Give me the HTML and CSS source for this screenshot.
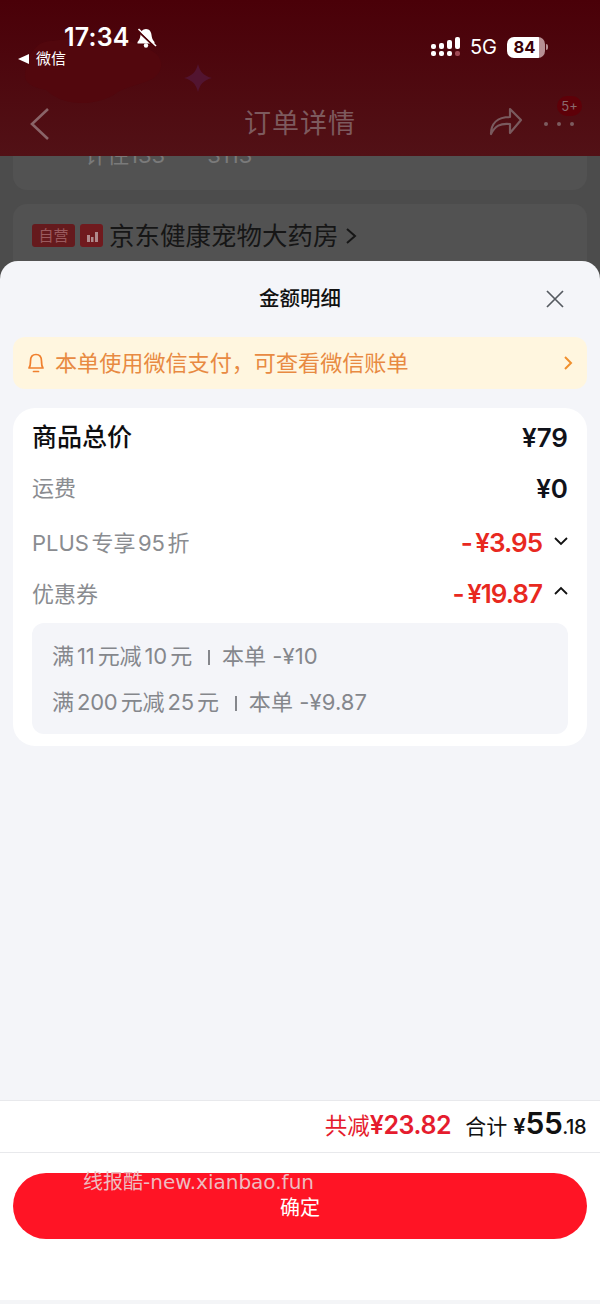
FILE: index.html
```html
<!DOCTYPE html>
<html lang="zh">
<head>
<meta charset="utf-8">
<title>金额明细</title>
<link rel="stylesheet" href="styles.css">
</head>
<body>
<div class="page">
  <div class="backdrop">
    <header class="head">
      <svg class="deco" width="240" height="110" viewBox="0 0 240 110"><path class="deco-cloud" d="M25 62C26 40 38 26 52 27C64 25 76 24 90 24C110 20 130 26 150 36C164 42 166 58 150 66C136 72 128 72 118 78C96 94 62 92 46 76C38 74 26 72 25 62Z"/><path class="deco-star" d="M198 50C200 58 204 62 212 64C204 66 200 70 198 78C196 70 192 66 184 64C192 62 196 58 198 50Z"/></svg>
      <div class="status">
        <div class="status-left">
          <div class="time-row">
            <span class="time">17:34</span>
            <svg class="bell-off" width="22" height="22" viewBox="0 0 22 22"><path class="solid" d="M11 2C7.500 2 5.800 4.800 5.500 8C5.200 11 4.300 13 2.500 15V16.500H19.500V15C17.700 13 16.800 11 16.500 8C16.200 4.800 14.500 2 11 2Z"/><circle class="solid" cx="11" cy="18.500" r="2.200"/><path class="cut" d="M2 3L20 20"/><path class="slash" d="M3.500 2L21 19"/></svg>
          </div>
          <div class="back-app"><span class="tri"></span><span>微信</span></div>
        </div>
        <div class="status-right">
          <svg class="signal" width="30" height="22" viewBox="0 0 30 22"><g class="solid"><rect x="0" y="8" width="5" height="5" rx="2"/><rect x="0" y="15" width="5" height="5" rx="2"/><rect x="8" y="7" width="5" height="6" rx="2"/><rect x="8" y="15" width="5" height="5" rx="2"/><rect x="16" y="4" width="5" height="9" rx="2"/><rect x="16" y="15" width="5" height="5" rx="2"/><rect x="24" y="1" width="5" height="12" rx="2"/></g><rect class="dim" x="24" y="15" width="5" height="5" rx="2"/></svg>
          <span class="net">5G</span>
          <div class="battery"><span class="battery-num">84</span></div>
          <span class="battery-tip"></span>
        </div>
      </div>
      <nav class="nav">
        <svg class="nav-back" width="22" height="34" viewBox="0 0 22 34"><path d="M19 2L3 17L19 32"/></svg>
        <h1 class="nav-title">订单详情</h1>
        <div class="nav-actions">
          <svg class="share" width="34" height="30" viewBox="0 0 34 30"><path d="M2 28C2 18 8 11 21 11V3L32 14L21 27V18C11 17 6 20 2 28Z"/></svg>
          <div class="more"><i></i><i></i><i></i><span class="badge">5+</span></div>
        </div>
      </nav>
    </header>
    <div class="under">
      <div class="ghost-card ghost-top"><span class="ghost-text">计住133</span><span class="ghost-text ghost-gap">3113</span></div>
      <div class="ghost-card ghost-shop">
        <span class="tag-self">自营</span>
        <span class="tag-bars"><svg width="14" height="14" viewBox="0 0 14 14"><path d="M2 6h3v7H2zM6 8h2.500v5H6zM10 3h3v10h-3z"/></svg></span>
        <span class="shop-name">京东健康宠物大药房</span>
        <svg class="shop-arrow" width="12" height="20" viewBox="0 0 12 20"><path d="M2 3L10 10L2 17"/></svg>
      </div>
    </div>
  </div>

  <section class="sheet">
    <div class="sheet-head">
      <h2 class="sheet-title">金额明细</h2>
      <svg class="close" width="20" height="20" viewBox="0 0 20 20"><path d="M2 2L18 18M18 2L2 18"/></svg>
    </div>
    <div class="notice">
      <svg class="notice-bell" width="20" height="22" viewBox="0 0 20 22"><path d="M3 16C4.500 14 4.500 11 4.500 9C4.500 5 6.500 2.500 10 2.500C13.500 2.500 15.500 5 15.500 9C15.500 11 15.500 14 17 16ZM7.500 19.500H12.500"/></svg>
      <span class="notice-text">本单使用微信支付，可查看微信账单</span>
      <svg class="notice-arrow" width="10" height="16" viewBox="0 0 10 16"><path d="M2 2L8 8L2 14"/></svg>
    </div>
    <div class="card">
      <div class="row row-total">
        <span class="label-strong">商品总价</span>
        <span class="value">¥79</span>
      </div>
      <div class="row row-ship">
        <span class="label">运费</span>
        <span class="value">¥0</span>
      </div>
      <div class="row row-plus">
        <span class="label">PLUS 专享 95 折</span>
        <span class="amount">
          <span class="value-red">- ¥3.95</span>
          <svg class="chev" width="14" height="10" viewBox="0 0 14 10"><path d="M1 2L7 8L13 2"/></svg>
        </span>
      </div>
      <div class="row row-coupon">
        <span class="label">优惠券</span>
        <span class="amount">
          <span class="value-red">- ¥19.87</span>
          <svg class="chev" width="14" height="10" viewBox="0 0 14 10"><path d="M1 8L7 2L13 8"/></svg>
        </span>
      </div>
      <div class="coupons">
        <p class="coupon"><span class="coupon-rule">满 11 元减 10 元</span><i class="sep"></i><span class="coupon-tail">本单 -¥10</span></p>
        <p class="coupon"><span class="coupon-rule">满 200 元减 25 元</span><i class="sep"></i><span class="coupon-tail">本单 -¥9.87</span></p>
      </div>
    </div>
    <div class="spacer"></div>
    <div class="summary">
      <span class="saved">共减<b>¥23.82</b></span>
      <span class="sum">合计 <b class="yen">¥</b><b class="big">55</b><b class="cents">.18</b></span>
    </div>
    <div class="actions">
      <button class="confirm">确定</button>
      <span class="watermark">线报酷-new.xianbao.fun</span>
    </div>
    <div class="foot-strip"></div>
  </section>
</div>
</body>
</html>
```

FILE: styles.css
```css
* { box-sizing: border-box; }
html, body { margin: 0; padding: 0; }
body {
  width: 600px;
  height: 1304px;
  overflow: hidden;
  font-family: "Inter", "Noto Sans CJK SC", sans-serif;
  background: #f4f5f9;
}
h1, h2, p { margin: 0; font-weight: 400; }
.page { display: flex; flex-direction: column; height: 1304px; position: relative; }

/* backdrop */
.backdrop { height: 281px; background: #4c4c4c; flex: none; overflow: hidden; display: flex; flex-direction: column; }
.head {
  position: relative;
  height: 156px;
  flex: none;
  z-index: 1;
  overflow: hidden;
  background: linear-gradient(#4a0008, #521116);
  display: flex;
  flex-direction: column;
}
.deco { position: absolute; left: 0; top: 14px; }
.deco-cloud { fill: #52070d; }
.deco-star { fill: #521430; }
.status { position: relative; display: flex; justify-content: space-between; padding: 22px 52px 0 18px; height: 100px; }
.status-left { display: flex; flex-direction: column; }
.time-row { display: flex; align-items: center; gap: 5px; padding-left: 46px; height: 30px; }
.time { font-size: 25px; font-weight: 600; color: #fff; line-height: 30px; letter-spacing: .2px; }
.bell-off { margin-top: 1px; }
.bell-off .solid { fill: #fff; }
.bell-off .cut { stroke: #4e0309; stroke-width: 2px; fill: none; }
.bell-off .slash { stroke: #fff; stroke-width: 1.600px; fill: none; }
.back-app { display: flex; align-items: center; gap: 7px; font-size: 15px; line-height: 20px; color: #fff; margin-top: -3px; }
.tri { width: 0; height: 0; border-style: solid; border-width: 5.500px 11px 5.500px 0; border-color: transparent #fff transparent transparent; }
.status-right { display: flex; align-items: center; height: 54px; margin-top: -2px; }
.signal .solid { fill: #fff; }
.signal .dim { fill: #a04a55; }
.net { font-size: 20px; color: #fff; margin-left: 9px; line-height: 22px; }
.battery { margin-left: 10px; width: 38px; height: 21px; border-radius: 7px; background: linear-gradient(90deg, #fff 84%, #b79094 84%); display: flex; align-items: center; justify-content: center; padding-right: 3px; }
.battery-num { font-size: 16.500px; font-weight: 700; line-height: 21px; color: #3a0208; }
.battery-tip { width: 2px; height: 6px; margin-left: 1px; background: #b79094; border-radius: 0 2px 2px 0; }
.nav { position: relative; flex: 1; display: flex; align-items: center; justify-content: center; margin-top: -8px; }
.nav-back { position: absolute; left: 29px; top: 15px; }
.nav-back path { fill: none; stroke: #8a6468; stroke-width: 2.600px; }
.nav-title { font-size: 27px; line-height: 36px; color: #7d5a5e; letter-spacing: 1px; }
.nav-actions { position: absolute; right: 0; top: 0; width: 120px; height: 64px; }
.share { position: absolute; left: 9px; top: 14px; }
.share path { fill: none; stroke: #7a5a5e; stroke-width: 2.200px; stroke-linejoin: round; }
.more { position: absolute; left: 64px; top: 30px; display: flex; gap: 9px; }
.more i { width: 4px; height: 4px; border-radius: 50%; background: #7c5c60; }
.badge { position: absolute; left: 13px; top: -26px; width: 25px; height: 20px; border-radius: 10px; background: #5e0008; color: #8a6a6e; font-size: 13px; line-height: 20px; text-align: center; }

.under { padding: 0 13px; flex: 1; margin-top: -22px; }
.ghost-card { background: #525252; border-radius: 14px; }
.ghost-top { height: 56px; padding: 8px 0 0 72px; overflow: hidden; }
.ghost-text { font-size: 22px; color: #7a7a7a; line-height: 26px; }
.ghost-gap { margin-left: 42px; }
.ghost-shop { margin-top: 14px; height: 100px; padding: 16px 0 0 19px; display: flex; align-items: flex-start; }
.tag-self { width: 43px; height: 23px; border-radius: 3px; background: #651a1d; color: #9a5a5e; font-size: 15px; line-height: 23px; text-align: center; margin-top: 4px; }
.tag-bars { width: 23px; height: 23px; border-radius: 3px; background: #701a1e; margin: 4px 0 0 5px; display: flex; align-items: center; justify-content: center; }
.tag-bars path { fill: #b08a8c; }
.shop-name { font-size: 25.500px; line-height: 32px; color: #161616; margin-left: 6px; }
.shop-arrow { margin: 6px 0 0 6px; }
.shop-arrow path { fill: none; stroke: #161616; stroke-width: 2px; }

/* sheet */
.sheet {
  position: relative;
  z-index: 2;
  flex: 1;
  margin-top: -20px;
  background: #f4f5f9;
  border-radius: 18px 18px 0 0;
  display: flex;
  flex-direction: column;
}
.sheet-head { height: 76px; flex: none; position: relative; display: flex; align-items: center; justify-content: center; }
.sheet-title { font-size: 20.500px; font-weight: 500; color: #111; line-height: 28px; }
.close { position: absolute; right: 35px; top: 28px; }
.close path { fill: none; stroke: #555a60; stroke-width: 1.700px; }
.notice { margin: 0 13px; height: 52px; flex: none; background: #fff6df; border-radius: 12px; display: flex; align-items: center; padding: 0 14px 0 13px; color: #ec8a3c; }
.notice-bell path { fill: none; stroke: #f0802e; stroke-width: 1.700px; stroke-linejoin: round; stroke-linecap: round; }
.notice-text { font-size: 22.100px; line-height: 30px; margin-left: 9px; flex: 1; color: #e88a42; }
.notice-arrow path { fill: none; stroke: #f0902e; stroke-width: 2px; }

.card { margin: 19px 13px 0; height: 338px; flex: none; background: #fff; border-radius: 22px; padding: 0 19px; display: flex; flex-direction: column; }
.row { display: flex; justify-content: space-between; align-items: center; flex: none; }
.row-total { height: 59px; }
.row-ship { height: 45px; }
.row-plus { height: 62px; }
.row-coupon { height: 41px; }
.label-strong { font-size: 25px; font-weight: 500; color: #0e0e10; line-height: 34px; margin-top: -2px; }
.label { font-size: 22px; color: #8a8c90; line-height: 30px; word-spacing: -3.700px; }
.row-ship .label { margin-top: -4px; }
.row-ship .value { margin-top: -2px; }
.value { font-size: 26px; font-weight: 600; color: #10121a; line-height: 32px; }
.amount { display: flex; align-items: center; gap: 12px; }
.value-red { font-size: 26px; font-weight: 600; color: #e8291f; line-height: 32px; letter-spacing: -1px; word-spacing: -2px; }
.row-coupon .amount, .row-coupon .label { margin-top: -2px; }
.chev { margin-top: -5px; }
.chev path { fill: none; stroke: #111; stroke-width: 1.800px; }
.coupons { margin-top: 8px; height: 111px; background: #f4f5f9; border-radius: 12px; padding: 12px 20px 0; }
.coupon { font-size: 22px; color: #85878c; line-height: 42px; height: 46px; white-space: nowrap; }
.coupon-rule { word-spacing: -2.500px; letter-spacing: -.3px; }
.coupon-tail { letter-spacing: .1px; }
.sep { display: inline-block; width: 2px; height: 15px; background: #85878c; margin: 0 12px 0 16px; vertical-align: -1px; }

.spacer { flex: 1; }
.summary { flex: none; height: 53px; background: #fff; border-top: 1.500px solid #e8e9ec; border-bottom: 1.500px solid #e8e9ec; display: flex; justify-content: flex-end; align-items: center; gap: 14px; padding: 0 14px 3px 0; }
.saved { font-size: 22.500px; color: #e51c2e; line-height: 30px; }
.saved b { font-size: 25px; font-weight: 600; letter-spacing: -.4px; }
.sum { font-size: 21px; color: #111; line-height: 30px; }
.sum .yen { font-size: 22px; font-weight: 600; }
.sum .big { font-size: 30px; font-weight: 600; letter-spacing: -.5px; }
.sum .cents { font-size: 20px; font-weight: 500; letter-spacing: -.5px; }
.actions { flex: none; height: 147px; background: #fff; padding: 20px 13px 0; position: relative; }
.confirm { display: block; width: 100%; height: 66px; border: 0; border-radius: 33px; background: #ff1425; color: #fff; font: 400 20px/22px "Inter", "Noto Sans CJK SC", sans-serif; padding: 4px 0 0; }
.watermark { position: absolute; left: 83px; top: 19px; font-family: "DejaVu Sans", "Noto Sans CJK SC", sans-serif; font-size: 20px; line-height: 20px; color: #eebcc0; white-space: nowrap; }
.foot-strip { flex: none; height: 4px; background: #f4f5f7; }
```
